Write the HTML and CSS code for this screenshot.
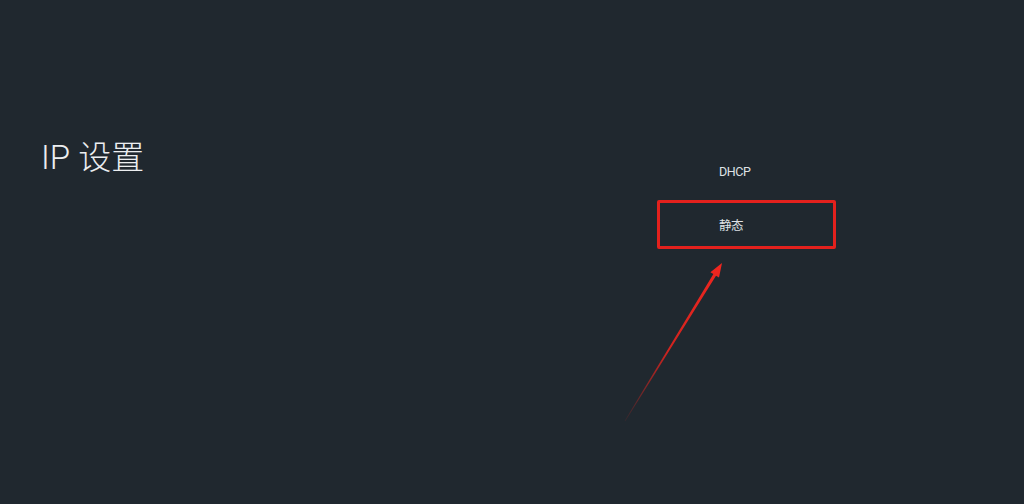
FILE: index.html
```html
<!DOCTYPE html>
<html>
<head>
    <meta charset="utf-8">
    <meta name="viewport" content="width=device-width">
    <title>IP 设置</title>
    <link rel="stylesheet" href="styles.css">
</head>

<body>
    <div class="screen">
        <div class="screen__side">
            <h1 class="screen__title">IP 设置</h1>
        </div>
        <ul class="options">
            <li class="options__item">DHCP</li>
            <li class="options__item options__item--marked">静态</li>
        </ul>
    </div>

    <svg class="callout" viewBox="0 0 1024 504" width="1024" height="504">
        <defs>
            <linearGradient id="fade" gradientUnits="userSpaceOnUse" x1="625" y1="421" x2="722" y2="263">
                <stop offset="0" stop-color="#e5231d" stop-opacity="0.1"/>
                <stop offset="0.45" stop-color="#e5231d" stop-opacity="0.9"/>
                <stop offset="1" stop-color="#f2261f"/>
            </linearGradient>
        </defs>
        <polygon fill="url(#fade)" points="624.7,420.8 713.4,274.1 710.4,272.3 722,263 719,277.5 716,275.7 625.3,421.2"/>
    </svg>
</body>
</html>
```

FILE: styles.css
```css
* {
    box-sizing: border-box;
}

html, body {
    margin: 0;
    padding: 0;
}

body {
    height: 100vh;
    background: #20282f;
    color: #eceef0;
    font-family: Roboto, "Noto Sans CJK SC", sans-serif;
    overflow: hidden;
}

.screen {
    display: flex;
    height: 100vh;
}

.screen__side {
    width: 657px;
    padding: 136px 0 0 41px;
}

.screen__title {
    margin: 0;
    font-size: 33px;
    font-weight: 300;
    line-height: 44px;
}

.options {
    list-style: none;
    margin: 0;
    padding: 147px 0 0;
    width: 179px;
    display: flex;
    flex-direction: column;
    gap: 4px;
}

.options__item {
    height: 49px;
    padding-left: 59px;
    display: flex;
    align-items: center;
    font-size: 12.5px;
    letter-spacing: -0.4px;
    color: #dfe2e5;
    border: 3px solid transparent;
    border-radius: 2px;
}

.options__item--marked {
    border-color: #e3211d;
}

.callout {
    position: absolute;
    top: 0;
    left: 0;
    pointer-events: none;
}
```
